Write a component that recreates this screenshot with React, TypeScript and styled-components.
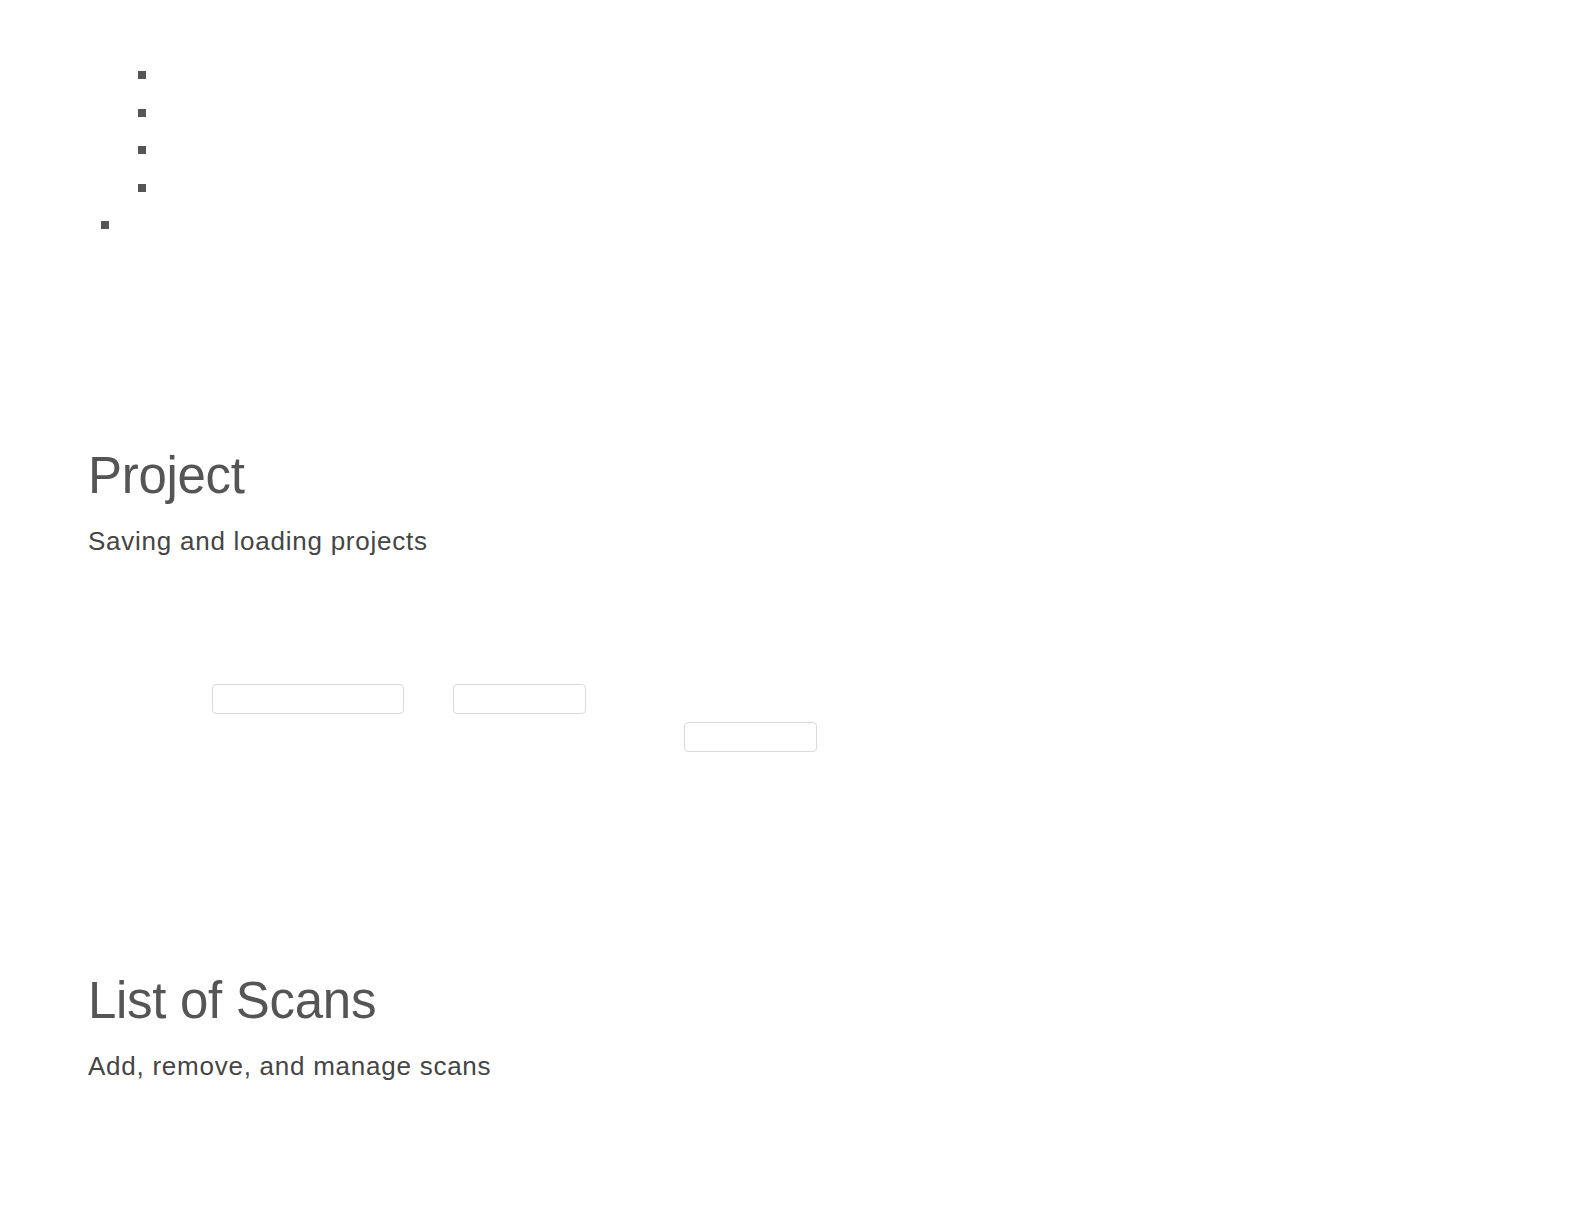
import React from "react";
import styled, { createGlobalStyle } from "styled-components";

const GlobalStyle = createGlobalStyle`
  html, body {
    margin: 0;
    padding: 0;
    background: #ffffff;
  }
  body {
    font-family: "Liberation Sans", Arial, sans-serif;
    color: #555555;
    font-size: 25px;
    line-height: 37.5px;
  }
`;

const Page = styled.div`
  padding: 0 0 120px 88px;
`;

const NavList = styled.ul`
  list-style: square;
  margin: 55px 0 0 0;
  padding: 0 0 0 35px;
  color: #555555;
`;

const SubNavList = styled.ul`
  list-style: square;
  margin: 0;
  padding: 0 0 0 37px;
`;

const NavItem = styled.li`
  height: 37.5px;
`;

const GroupItem = styled.li`
  list-style: none;
`;

const Section = styled.section<{ $top: number }>`
  margin-top: ${(p) => p.$top}px;
`;

const Title = styled.h2`
  margin: 0;
  font-weight: 400;
  font-size: 51px;
  line-height: 60px;
  color: #555555;
  letter-spacing: -0.3px;
`;

const Subtitle = styled.p`
  margin: 17px 0 0 0;
  font-size: 26px;
  line-height: 37.5px;
  letter-spacing: 0.75px;
  color: #454545;
`;

const FormRow = styled.div<{ $indent: number }>`
  display: flex;
  align-items: center;
  gap: 49px;
  height: 38px;
  padding-left: ${(p) => p.$indent}px;
`;

const Field = styled.div<{ $w: number }>`
  width: ${(p) => p.$w}px;
  height: 30px;
  box-sizing: border-box;
  border: 1.5px solid #dadada;
  border-radius: 4px;
  background: #ffffff;
`;

const Form = styled.div`
  margin-top: 120px;
`;

export default function App() {
  return (
    <>
      <GlobalStyle />
      <Page>
        <NavList>
          <GroupItem>
            <SubNavList>
              <NavItem />
              <NavItem />
              <NavItem />
              <NavItem />
            </SubNavList>
          </GroupItem>
          <NavItem />
        </NavList>
        <Section $top={203}>
          <Title>Project</Title>
          <Subtitle>Saving and loading projects</Subtitle>
          <Form>
            <FormRow $indent={124}>
              <Field $w={192} />
              <Field $w={133} />
            </FormRow>
            <FormRow $indent={596}>
              <Field $w={133} />
            </FormRow>
          </Form>
        </Section>
        <Section $top={215}>
          <Title>List of Scans</Title>
          <Subtitle>Add, remove, and manage scans</Subtitle>
        </Section>
      </Page>
    </>
  );
}
